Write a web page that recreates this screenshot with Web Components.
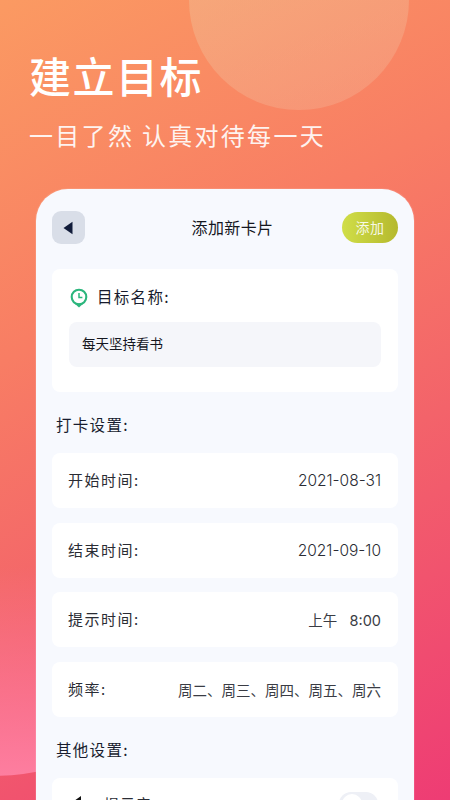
<!DOCTYPE html>
<html lang="zh">
<head>
<meta charset="utf-8">
<style>
html,body{margin:0;height:800px;overflow:hidden;}
body{font-family:"Noto Sans CJK SC","Inter",sans-serif;}
</style>
</head>
<body>
<promo-screen>
    <promo-heading slot="head" title="建立目标" sub="一目了然 认真对待每一天"></promo-heading>
    <card-panel slot="card">
        <goal-box></goal-box>
        <section-label>打卡设置:</section-label>
        <setting-group>
            <setting-row label="开始时间:" value="2021-08-31" date></setting-row>
            <setting-row label="结束时间:" value="2021-09-10" date></setting-row>
            <setting-row label="提示时间:" value="上午&#160;&#160;&#160;8:00"></setting-row>
            <setting-row label="频率:" value="周二、周三、周四、周五、周六"></setting-row>
        </setting-group>
        <section-label>其他设置:</section-label>
        <sound-row></sound-row>
    </card-panel>
</promo-screen>

<script>
class PromoScreen extends HTMLElement{
    constructor(){
        super();
        this.attachShadow({mode:"open"}).innerHTML = `
        <style>
            :host{
                display:block;
                position:relative;
                width:450px;
                height:800px;
                overflow:hidden;
                background:linear-gradient(152deg,#fb9a62 0%,#f87d64 35%,#f3636a 62%,#ee3c74 100%);
            }
            .sun{
                position:absolute;
                left:189px;
                top:-110px;
                width:220px;
                height:220px;
                border-radius:50%;
                background:linear-gradient(160deg,rgba(236,205,160,.42),rgba(245,200,175,.24));
            }
            .blob{
                position:absolute;
                left:-180px;
                top:556px;
                width:340px;
                height:220px;
                border-radius:50%;
                background:linear-gradient(180deg,rgba(255,140,170,0) 5%,rgba(255,130,165,.9) 100%);
            }
            .wrap{
                position:relative;
                display:flex;
                flex-direction:column;
                padding:49px 36px 0;
            }
        </style>
        <div class="sun"></div>
        <div class="blob"></div>
        <div class="wrap">
            <slot name="head"></slot>
            <slot name="card"></slot>
        </div>`;
    }
}

class PromoHeading extends HTMLElement{
    constructor(){
        super();
        this.attachShadow({mode:"open"}).innerHTML = `
        <style>
            :host{display:block;color:#fff;margin-left:-7px;height:140px;}
            h1{margin:0;font-size:42px;line-height:52px;font-weight:500;letter-spacing:1.5px;}
            p{margin:16px 0 0;font-size:24px;line-height:36px;font-weight:400;letter-spacing:2.3px;opacity:.9;white-space:pre;}
        </style>
        <h1>${this.getAttribute("title")}</h1>
        <p>${this.getAttribute("sub")}</p>`;
    }
}

class CardPanel extends HTMLElement{
    constructor(){
        super();
        this.attachShadow({mode:"open"}).innerHTML = `
        <style>
            :host{
                display:block;
                box-sizing:border-box;
                width:378px;
                height:640px;
                padding:22px 16px 0;
                background:#f7f9fe;
                border-radius:32px 32px 0 0;
                box-shadow:0 0 0 1px rgba(255,255,255,.1);
            }
            .bar{display:flex;align-items:center;justify-content:space-between;height:33px;margin-bottom:25px;}
            .back{
                width:33px;height:33px;border-radius:9px;background:#d9dee8;
                display:flex;align-items:center;justify-content:center;
            }
            .title{margin-left:38px;padding-bottom:2px;font-size:16px;color:#15171f;letter-spacing:.4px;}
            .add{
                width:56px;height:31px;border-radius:16px;
                background:linear-gradient(90deg,#d0de48,#b5b92e);
                color:rgba(255,255,255,.88);font-size:14px;line-height:31px;text-align:center;letter-spacing:.4px;
            }
        </style>
        <div class="bar">
            <div class="back">
                <svg width="10" height="14" viewBox="0 0 10 14" style="margin-left:-2px"><path d="M9.5 0.8V13.2L0.5 7Z" fill="#111c3a"/></svg>
            </div>
            <div class="title">添加新卡片</div>
            <div class="add">添加</div>
        </div>
        <slot></slot>`;
    }
}

class GoalBox extends HTMLElement{
    constructor(){
        super();
        this.attachShadow({mode:"open"}).innerHTML = `
        <style>
            :host{
                display:block;box-sizing:border-box;height:123px;
                padding:15px 17px 0;background:#fff;border-radius:8px;
            }
            .head{display:flex;align-items:center;gap:9px;height:24px;font-size:15.5px;color:#181c2e;letter-spacing:1.3px;}
            svg{display:block;margin-left:1px;margin-top:3px;}
            .input{
                margin-top:14px;height:45px;line-height:43px;
                padding-left:13px;background:#f5f6fa;border-radius:8px;
                font-size:13.5px;color:#15171f;
            }
        </style>
        <div class="head">
            <svg width="18" height="20" viewBox="0 0 18 20" fill="none">
                <circle cx="9" cy="9" r="7.3" stroke="#2cb67d" stroke-width="2.1"/>
                <path d="M4.6 15.6H13.4L9 19.4Z" fill="#2cb67d"/>
                <path d="M9 5V9.4H12.4" stroke="#2cb67d" stroke-width="1.5"/>
            </svg>
            <span>目标名称:</span>
        </div>
        <div class="input">每天坚持看书</div>`;
    }
}

class SectionLabel extends HTMLElement{
    constructor(){
        super();
        this.attachShadow({mode:"open"}).innerHTML = `
        <style>
            :host{display:block;padding-left:4px;height:61px;line-height:65px;font-size:15.5px;color:#181c2e;letter-spacing:1.3px;}
        </style>
        <slot></slot>`;
    }
}

class SettingGroup extends HTMLElement{
    constructor(){
        super();
        this.attachShadow({mode:"open"}).innerHTML = `
        <style>
            :host{display:flex;flex-direction:column;gap:14.5px;}
        </style>
        <slot></slot>`;
    }
}

class SettingRow extends HTMLElement{
    constructor(){
        super();
        const isDate = this.hasAttribute("date");
        this.attachShadow({mode:"open"}).innerHTML = `
        <style>
            :host{
                display:flex;align-items:center;justify-content:space-between;
                box-sizing:border-box;height:55px;padding:0 17px 0 16px;
                background:#fff;border-radius:8px;
            }
            .l{padding-bottom:2px;font-size:15px;color:#2a2c34;letter-spacing:1.5px;}
            .v{
                font-family:"Inter","Noto Sans CJK SC",sans-serif;
                font-size:${isDate ? "15.5px" : "14.5px"};
                font-weight:${isDate ? 300 : 400};
                color:${isDate ? "#2a2c34" : "#3a3c44"};
            }
        </style>
        <span class="l">${this.getAttribute("label")}</span>
        <span class="v">${this.getAttribute("value")}</span>`;
    }
}

class SoundRow extends HTMLElement{
    constructor(){
        super();
        this.attachShadow({mode:"open"}).innerHTML = `
        <style>
            :host{
                display:flex;align-items:center;justify-content:space-between;
                box-sizing:border-box;height:55px;padding:0 20px 3px 17px;
                background:#fff;border-radius:8px;
            }
            .left{display:flex;align-items:center;gap:22px;font-size:15px;color:#2a2c34;letter-spacing:1px;}
            .toggle{width:39px;height:24px;border-radius:12px;background:#eef0f6;position:relative;}
            .toggle::after{content:"";position:absolute;left:3px;top:2px;width:20px;height:20px;border-radius:50%;background:#fff;}
        </style>
        <div class="left">
            <svg width="13" height="18" viewBox="0 0 13 18"><path d="M0 6H5L12 1V17L5 12H0Z" fill="#111"/></svg>
            <span>提示音</span>
        </div>
        <div class="toggle"></div>`;
    }
}

customElements.define("promo-screen",PromoScreen);
customElements.define("promo-heading",PromoHeading);
customElements.define("card-panel",CardPanel);
customElements.define("goal-box",GoalBox);
customElements.define("section-label",SectionLabel);
customElements.define("setting-group",SettingGroup);
customElements.define("setting-row",SettingRow);
customElements.define("sound-row",SoundRow);
</script>
</body>
</html>
